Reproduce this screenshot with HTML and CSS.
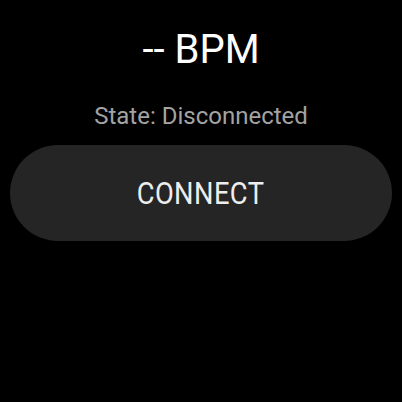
FILE: index.html
```html
<!DOCTYPE html>
<html lang="en">
<head>
  <meta charset="UTF-8" />
  <meta name="viewport" content="width=device-width, initial-scale=1" />
  <title>Heart Rate</title>
  <link rel="stylesheet" href="styles.css">
</head>
<body>

  <div class="screen">
    <h1 class="bpm">-- BPM</h1>
    <p class="state">State: Disconnected</p>
    <button class="connect-btn"><span>CONNECT</span></button>
  </div>

</body>
</html>
```

FILE: styles.css
```css
body {
  margin: 0;
  background: #000;
  font-family: Roboto, "Noto Sans", sans-serif;
  color: #fff;
}
.screen {
  width: 402px;
  height: 402px;
  display: flex;
  flex-direction: column;
  align-items: center;
  padding-top: 26px;
  box-sizing: border-box;
}
.bpm {
  margin: 0;
  font-size: 40px;
  font-weight: 400;
  line-height: 48px;
}
.state {
  margin: 28px 0 0;
  font-size: 24px;
  line-height: 28px;
  color: #a3a3a3;
}
.connect-btn {
  margin-top: 15px;
  width: 382px;
  height: 96px;
  border: none;
  border-radius: 48px;
  background: #252525;
  color: #eee;
  font-family: Roboto, sans-serif;
  font-size: 31px;
  letter-spacing: 0.5px;
  display: flex;
  align-items: center;
  justify-content: center;
  padding: 0;
}
.connect-btn span {
  display: inline-block;
  transform: scaleX(0.88);
}
```
